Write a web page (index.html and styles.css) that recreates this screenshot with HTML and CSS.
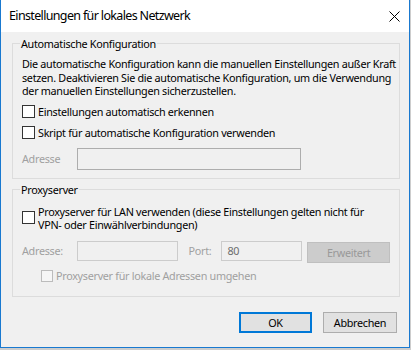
FILE: index.html
```html
<!DOCTYPE html>
<html lang="de">
<head>
  <meta charset="UTF-8" />
  <title>Einstellungen für lokales Netzwerk</title>
  <link rel="stylesheet" href="styles.css">
</head>
<body>
  <div class="window">
    <div class="titlebar">
      <span class="title">Einstellungen für lokales Netzwerk</span>
      <span class="close">
        <svg width="11" height="11" viewBox="0 0 11 11"><path d="M0.5 0.5L10.5 10.5M10.5 0.5L0.5 10.5" stroke="#000" stroke-width="1" fill="none"/></svg>
      </span>
    </div>

    <div class="dialog">
      <fieldset class="group group-auto">
        <legend>Automatische Konfiguration</legend>
        <p class="info">Die automatische Konfiguration kann die manuellen Einstellungen außer Kraft<br>setzen. Deaktivieren Sie die automatische Konfiguration, um die Verwendung<br>der manuellen Einstellungen sicherzustellen.</p>
        <label class="check first"><span class="box"></span>Einstellungen automatisch erkennen</label>
        <label class="check second"><span class="box"></span>Skript für automatische Konfiguration verwenden</label>
        <div class="field-row script-row">
          <span class="label disabled">Adresse</span>
          <span class="input wide"></span>
        </div>
      </fieldset>

      <fieldset class="group group-proxy">
        <legend>Proxyserver</legend>
        <label class="check lan"><span class="box"></span><span>Proxyserver für LAN verwenden (diese Einstellungen gelten nicht für<br>VPN- oder Einwählverbindungen)</span></label>
        <div class="field-row proxy-row">
          <span class="label disabled">Adresse:</span>
          <span class="input addr"></span>
          <span class="label disabled port-label">Port:</span>
          <span class="input port">80</span>
          <span class="btn btn-disabled">Erweitert</span>
        </div>
        <label class="check bypass disabled"><span class="box"></span>Proxyserver für lokale Adressen umgehen</label>
      </fieldset>

      <div class="actions">
        <button class="btn btn-default">OK</button>
        <button class="btn">Abbrechen</button>
      </div>
    </div>
  </div>
</body>
</html>
```

FILE: styles.css
```css
* {
  margin: 0;
  padding: 0;
  box-sizing: border-box;
}

body {
  background: #cdcdcd;
  font-family: 'Noto Sans', 'Open Sans', sans-serif;
  font-size: 10.8px;
  letter-spacing: -0.3px;
  color: #000;
}

.window {
  width: 410px;
  height: 348px;
  border: 1px solid #1979d0;
  border-top: none;
  background: #f0f0f0;
  display: flex;
  flex-direction: column;
}

.titlebar {
  height: 32px;
  background: #fff;
  display: flex;
  align-items: center;
  justify-content: space-between;
  padding: 0 9px 0 8px;
}

.title {
  font-size: 12.5px;
  letter-spacing: -0.65px;
  line-height: 20px;
}

.close {
  display: flex;
}

.dialog {
  flex: 1;
  padding: 4px 9px 0 11px;
  display: flex;
  flex-direction: column;
}

.group {
  border: 1px solid #dcdcdc;
  padding: 0 9px 8px 9px;
  min-width: 0;
}

.group legend {
  margin-left: -2px;
  padding: 0 1px;
  line-height: 15px;
}

.info {
  line-height: 13.5px;
  margin-top: 6px;
  white-space: nowrap;
}

.check {
  display: flex;
  align-items: center;
  gap: 3px;
  line-height: 14px;
  white-space: nowrap;
}

.box {
  width: 13px;
  height: 13px;
  border: 1px solid #333;
  background: #fff;
  flex-shrink: 0;
}

.check.first {
  margin-top: 7px;
}

.check.second {
  margin-top: 7px;
}

.check.lan {
  margin-top: 8px;
  line-height: 13px;
}

.check.bypass {
  margin-top: 6px;
  margin-left: 19px;
}

.check.disabled {
  color: #a0a0a0;
}

.check.disabled .box {
  width: 12px;
  height: 12px;
  border-color: #bcbcbc;
  background: #f6f6f6;
}

.field-row {
  display: flex;
  align-items: flex-start;
}

.script-row {
  margin-top: 8px;
}

.script-row .label {
  line-height: 22px;
}

.proxy-row {
  margin-top: 10px;
}

.label {
  width: 55px;
  line-height: 20px;
}

.disabled {
  color: #a0a0a0;
}

.port-label {
  width: 33px;
  margin-left: 11px;
}

.input {
  height: 20px;
  border: 1px solid #cccccc;
  background: #f0f0f0;
  color: #6d6d6d;
  padding-left: 5px;
  line-height: 18px;
}

.input.wide {
  width: 224px;
  height: 22px;
  border-color: #adadad;
}

.input.addr {
  width: 101px;
}

.input.port {
  width: 81px;
}

.btn {
  font-family: inherit;
  font-size: 10.8px;
  letter-spacing: -0.3px;
  height: 21px;
  border: 1px solid #adadad;
  background: #e1e1e1;
  color: #000;
  display: flex;
  align-items: center;
  justify-content: center;
}

.btn-disabled {
  width: 83px;
  margin-left: 5px;
  margin-top: 1px;
  background: #cccccc;
  border-color: #bfbfbf;
  color: #999;
}

.group-proxy {
  margin-top: 3px;
  padding-bottom: 13px;
}

.actions {
  display: flex;
  justify-content: flex-end;
  gap: 11px;
  margin-top: 15px;
  padding-right: 3px;
}

.actions .btn {
  width: 74px;
  height: 21px;
}

.actions .btn-default {
  width: 73px;
  border: 2px solid #0078d7;
}
```
